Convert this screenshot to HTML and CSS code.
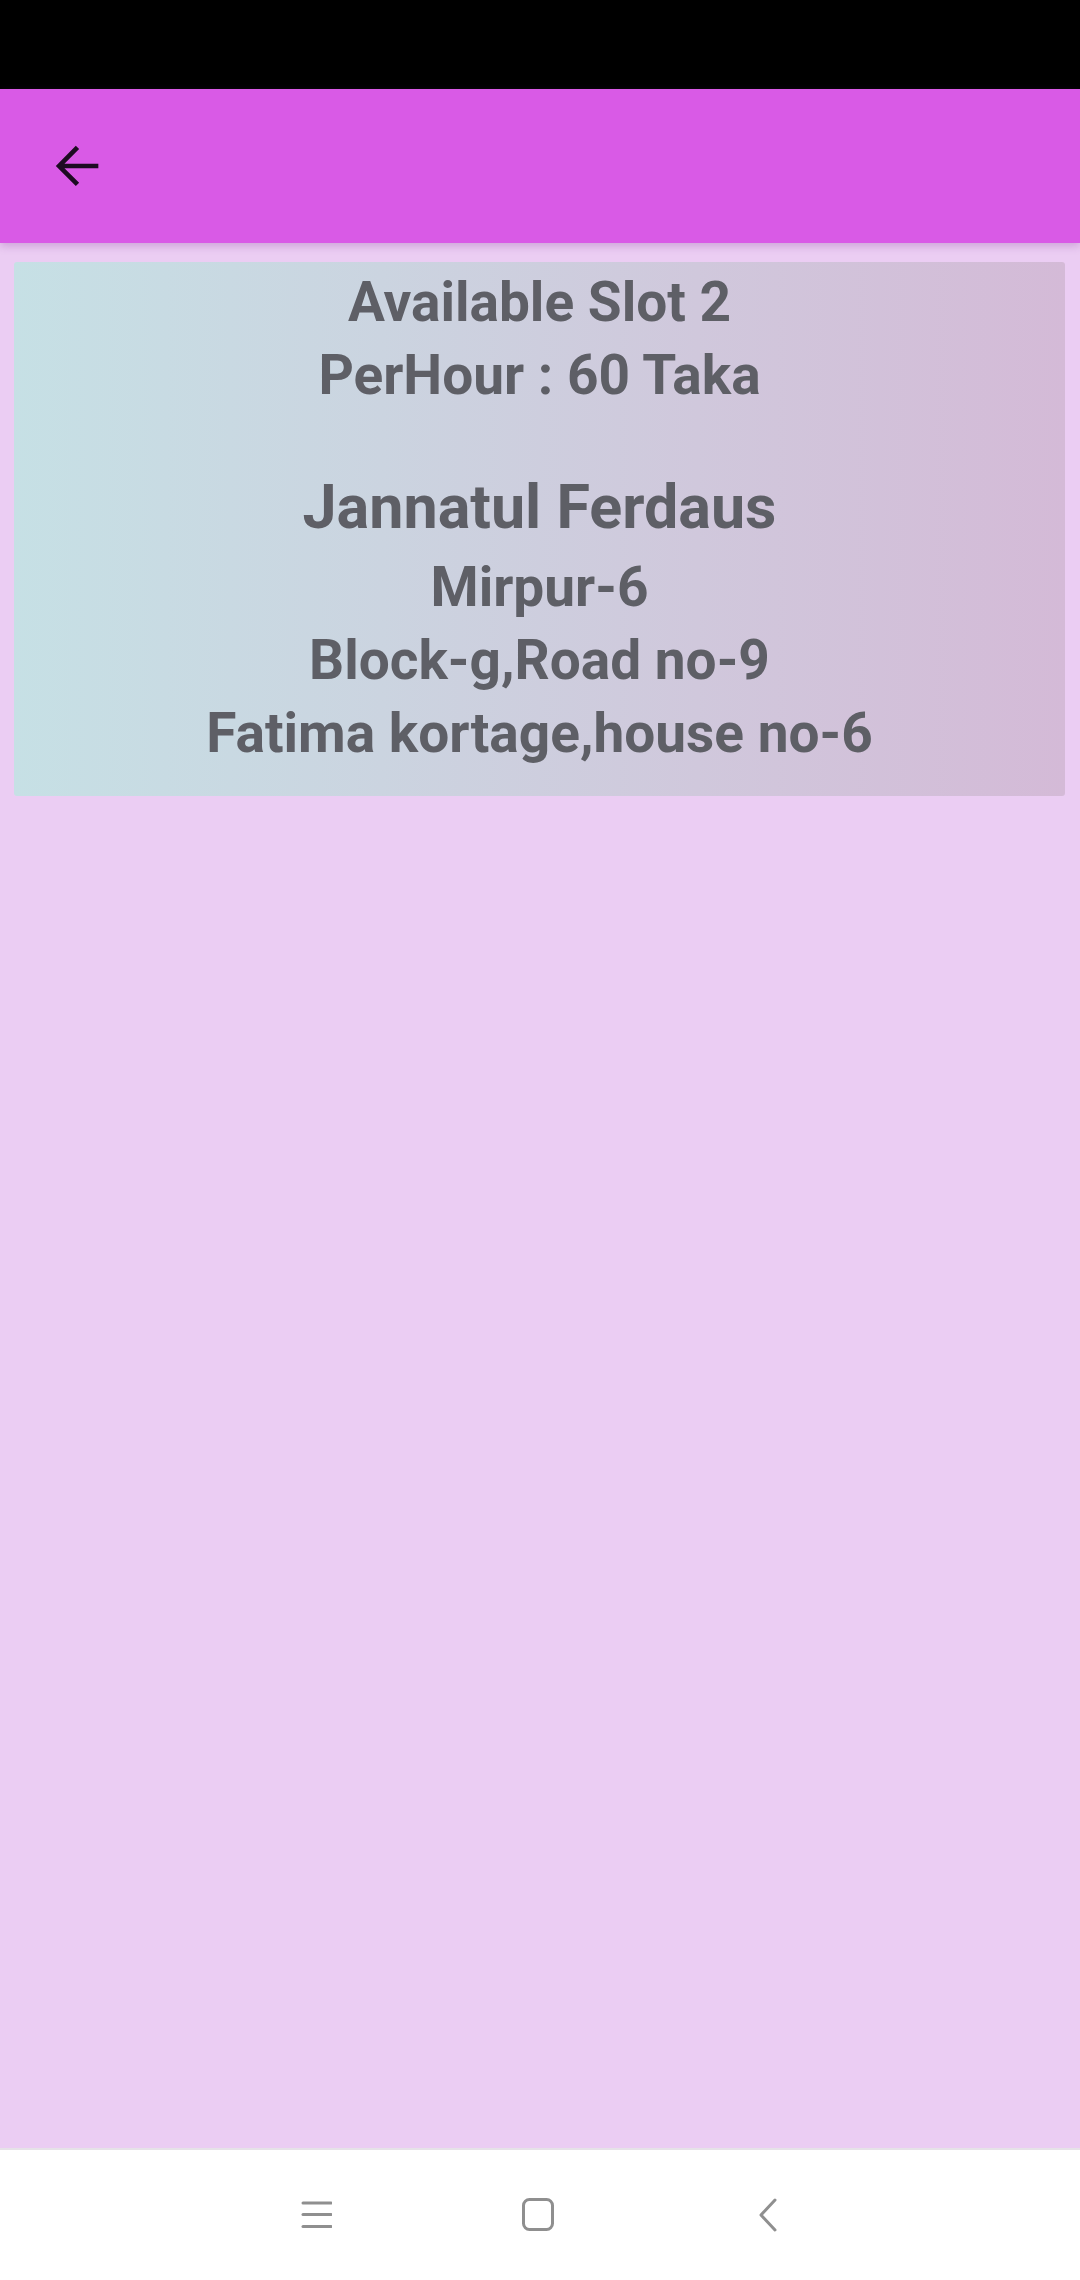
FILE: index.html
```html
<!DOCTYPE html>
<html>
<head>
<meta charset="utf-8">
<link rel="stylesheet" href="styles.css">
</head>
<body>
<div class="screen">
  <div class="statusbar"></div>
  <div class="appbar">
    <svg class="back" width="64" height="64" viewBox="0 0 48 48">
      <path d="M40 22.25H14.6l11-11L23.1 8.9 8.1 24l15 15 2.5-2.4-11-11h25.4z" fill="#1d0b22"/>
    </svg>
  </div>
  <div class="content">
    <div class="card">
      <div class="line">Available Slot 2</div>
      <div class="line">PerHour : 60 Taka</div>
      <div class="line name">Jannatul Ferdaus</div>
      <div class="line">Mirpur-6</div>
      <div class="line">Block-g,Road no-9</div>
      <div class="line">Fatima kortage,house no-6</div>
    </div>
  </div>
  <div class="navbar">
    <svg class="nav-icon" width="32" height="32" viewBox="0 0 32 32">
      <g stroke="#8f8f8f" stroke-width="3" stroke-linecap="round">
        <line x1="3" y1="4" x2="31" y2="4"/>
        <line x1="3" y1="15.5" x2="31" y2="15.5"/>
        <line x1="3" y1="27.5" x2="31" y2="27.5"/>
      </g>
    </svg>
    <svg class="nav-icon" width="32" height="34" viewBox="0 0 32 34">
      <rect x="1.5" y="1.5" width="29" height="30" rx="6" fill="none" stroke="#8f8f8f" stroke-width="3"/>
    </svg>
    <svg class="nav-icon" width="20" height="34" viewBox="0 0 20 34">
      <polyline points="17,2 3,17 17,32" fill="none" stroke="#8f8f8f" stroke-width="3" stroke-linecap="round" stroke-linejoin="round"/>
    </svg>
  </div>
</div>
</body>
</html>
```

FILE: styles.css
```css
html, body {
  margin: 0;
  padding: 0;
}
body {
  width: 1080px;
  height: 2280px;
  overflow: hidden;
  font-family: Roboto, "Liberation Sans", sans-serif;
}
.screen {
  width: 1080px;
  height: 2280px;
  display: flex;
  flex-direction: column;
  background: #ebcdf3;
}
.statusbar {
  height: 89px;
  background: #000;
  flex: none;
}
.appbar {
  height: 154px;
  background: #d95ae6;
  flex: none;
  display: flex;
  align-items: center;
  padding-left: 45px;
  box-shadow: 0 3px 8px rgba(120, 40, 140, 0.25);
  position: relative;
  z-index: 1;
}
.back {
  display: block;
}
.content {
  flex: 1;
  padding: 19px 15px 0 14px;
}
.card {
  height: 534px;
  box-sizing: border-box;
  border-radius: 3px;
  background: linear-gradient(to right, #c6e0e5 0%, #cbd4e0 35%, #d0c8dc 65%, #d4bad7 100%);
  display: flex;
  flex-direction: column;
  align-items: center;
  padding-top: 4px;
  color: #5e5f66;
  font-weight: 700;
}
.line {
  font-size: 55px;
  line-height: 73px;
  white-space: nowrap;
}
.name {
  font-size: 61px;
  line-height: 79px;
  margin-top: 56px;
  margin-bottom: 4px;
}
.navbar {
  height: 130px;
  flex: none;
  background: #fff;
  border-top: 2px solid #e6e2e8;
  display: flex;
  align-items: center;
  padding-left: 300px;
  gap: 192px;
}
.nav-icon {
  display: block;
}
.nav-icon:nth-child(2) {
  margin-left: -2px;
}
.nav-icon:nth-child(3) {
  margin-left: 12px;
}
```
